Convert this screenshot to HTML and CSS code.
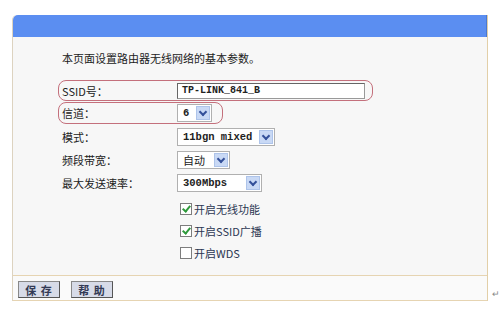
FILE: index.html
```html
<!DOCTYPE html>
<html lang="zh-CN">
<head>
  <meta charset="UTF-8" />
  <title>无线网络基本设置</title>
  <link rel="stylesheet" href="styles.css">
</head>
<body>

<div class="page">
  <!-- Settings panel -->
  <div class="panel">
    <div class="panel-head"></div>

    <div class="panel-body">
      <p class="intro">本页面设置路由器无线网络的基本参数。</p>

      <div class="row ring ring-wide">
        <span class="label">SSID号：</span>
        <span class="text-input">TP-LINK_841_B</span>
      </div>

      <div class="row ring ring-short">
        <span class="label">信道：</span>
        <span class="select sel-channel"><span class="value">6</span><span class="arrow"></span></span>
      </div>

      <div class="row">
        <span class="label">模式：</span>
        <span class="select sel-mode"><span class="value">11bgn mixed</span><span class="arrow"></span></span>
      </div>

      <div class="row">
        <span class="label">频段带宽：</span>
        <span class="select sel-band"><span class="value cjk">自动</span><span class="arrow"></span></span>
      </div>

      <div class="row">
        <span class="label">最大发送速率：</span>
        <span class="select sel-rate"><span class="value">300Mbps</span><span class="arrow"></span></span>
      </div>

      <div class="checks">
        <label class="check"><span class="box checked"></span>开启无线功能</label>
        <label class="check"><span class="box checked"></span>开启SSID广播</label>
        <label class="check"><span class="box"></span>开启WDS</label>
      </div>
    </div>

    <div class="panel-foot">
      <span class="btn">保 存</span>
      <span class="btn">帮 助</span>
    </div>
  </div>

  <span class="mark">↵</span>
</div>

</body>
</html>
```

FILE: styles.css
```css
* {
  margin: 0;
  padding: 0;
  box-sizing: border-box;
}

body {
  background-color: white;
  font-family: "Noto Sans CJK SC", "Noto Sans", sans-serif;
  font-size: 11px;
  color: #222;
}

.page {
  display: flex;
  align-items: flex-end;
  padding: 15px 0 0 12px;
}

.panel {
  width: 477px;
  border-left: 1px solid #ddd3c0;
  border-right: 1px solid #e2cfa8;
  border-radius: 5px 0 0 0;
}

.panel-head {
  height: 22px;
  background-color: #5b8ef1;
  border-radius: 5px 0 0 0;
  border-right: 1px solid #4a78d0;
}

.panel-body {
  background-color: #f7f7f7;
  padding: 13px 0 11px 49px;
}

.intro {
  line-height: 16px;
  height: 16px;
  margin-bottom: 14px;
}

/* form rows */
.row {
  display: flex;
  align-items: center;
  height: 23px;
}

.label {
  width: 115px;
  flex: none;
  line-height: 14px;
}

.ring {
  height: 21px;
  margin-left: -4px;
  padding-left: 3px;
  border: 1.5px solid #c4707c;
  border-radius: 8px;
  margin-bottom: 1px;
}

.ring + .ring {
  height: 22px;
  margin-bottom: 1px;
}

.ring-wide {
  width: 315px;
}

.ring-short {
  width: 165px;
}

.text-input {
  width: 188px;
  height: 16px;
  background: white;
  border: 1px solid #999;
  border-top-color: #666;
  border-left-color: #666;
  font-family: "Liberation Mono", monospace;
  font-size: 10px;
  font-weight: bold;
  line-height: 14px;
  padding-left: 4px;
  color: #222;
}

.select {
  display: flex;
  align-items: center;
  height: 18px;
  background: white;
  border: 1px solid #b0b0b0;
  padding: 1px;
}

.select .value {
  flex: 1;
  padding-left: 4px;
  font-family: "Liberation Mono", monospace;
  font-size: 10.5px;
  font-weight: bold;
  line-height: 14px;
}

.select .value.cjk {
  font-family: "Noto Sans CJK SC", sans-serif;
  font-weight: normal;
  font-size: 11px;
}

.select .arrow {
  width: 14px;
  height: 14px;
  background-color: #c9d9f5;
  border: 1px solid #aec4ea;
  position: relative;
}

.select .arrow::after {
  content: "";
  position: absolute;
  left: 3px;
  top: 2px;
  width: 4px;
  height: 4px;
  border-right: 2px solid #34509a;
  border-bottom: 2px solid #34509a;
  transform: rotate(45deg);
}

.sel-channel { width: 35px; }
.sel-mode    { width: 98px; }
.sel-band    { width: 53px; }
.sel-rate    { width: 85px; }

/* checkboxes */
.checks {
  padding: 4px 0 0 118px;
}

.check {
  display: flex;
  align-items: center;
  height: 22px;
  gap: 2px;
  color: #2b3652;
}

.box {
  width: 12px;
  height: 12px;
  border: 1px solid #7d7d7d;
  background: white;
  position: relative;
}

.box.checked::after {
  content: "";
  position: absolute;
  left: 3px;
  top: 0px;
  width: 3px;
  height: 6px;
  border-right: 2px solid #2f9a3c;
  border-bottom: 2px solid #2f9a3c;
  transform: rotate(40deg);
}

/* footer */
.panel-foot {
  display: flex;
  gap: 11px;
  height: 26px;
  padding: 5px 0 0 5px;
  background-color: #fafafa;
  border-top: 1.5px solid #e6d4b2;
  border-bottom: 1.5px solid #e6d4b2;
}

.btn {
  display: flex;
  align-items: center;
  justify-content: center;
  width: 42px;
  height: 17px;
  background-color: #d7dbe8;
  border: 1px solid #555;
  border-top-color: #888;
  border-left-color: #888;
  font-size: 11px;
  font-weight: bold;
  color: #333a55;
  letter-spacing: 1px;
}

.mark {
  font-size: 9px;
  color: #888;
  margin: 0 0 2px 4px;
  line-height: 10px;
}
```
